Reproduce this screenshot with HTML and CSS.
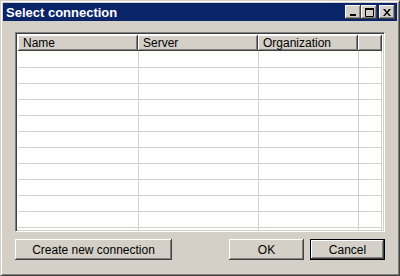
FILE: index.html
```html
<!DOCTYPE html>
<html lang="en">
<head>
  <meta charset="UTF-8">
  <title>Select connection</title>
  <link rel="stylesheet" href="styles.css">
</head>
<body>
  <div class="window">
    <div class="titlebar">
      <span class="title">Select connection</span>
      <div class="caption-btns">
        <button class="cap-btn" type="button">
          <svg width="8" height="7" viewBox="0 0 8 7"><rect x="1" y="5" width="6" height="2" fill="#000"/></svg>
        </button>
        <button class="cap-btn" type="button">
          <svg width="9" height="9" viewBox="0 0 9 9"><path d="M0.5 1.5h8v7h-8z" fill="none" stroke="#000"/><rect x="0" y="0" width="9" height="2" fill="#000"/></svg>
        </button>
        <button class="cap-btn close" type="button">
          <svg width="8" height="7" viewBox="0 0 8 7"><path d="M0 0h2l2 2.5l2-2.5h2l-3 3.5l3 3.5h-2l-2-2.5l-2 2.5h-2l3-3.5z" fill="#000"/></svg>
        </button>
      </div>
    </div>

    <div class="content">
      <div class="listview">
        <table>
          <thead>
            <tr>
              <th class="c-name">Name</th>
              <th class="c-server">Server</th>
              <th class="c-org">Organization</th>
              <th class="c-fill"></th>
            </tr>
          </thead>
          <tbody id="rows"></tbody>
        </table>
      </div>

      <div class="actions">
        <button class="btn btn-create" type="button">Create new connection</button>
        <div class="spacer"></div>
        <button class="btn btn-ok" type="button">OK</button>
        <button class="btn btn-cancel default" type="button">Cancel</button>
      </div>
    </div>
  </div>

  <script>
    const rows = document.getElementById("rows");
    let html = "";
    for (let i = 0; i < 12; i++) {
      html += "<tr><td></td><td></td><td></td><td></td></tr>";
    }
    rows.innerHTML = html;
  </script>
</body>
</html>
```

FILE: styles.css
```css
body {
  margin: 0;
  font-family: "Liberation Sans", Arial, sans-serif;
  font-size: 12px;
  background: #d4d0c8;
}

.window {
  width: 400px;
  height: 276px;
  box-sizing: border-box;
  background: #d4d0c8;
  border-top: 1px solid #d4d0c8;
  border-left: 1px solid #d4d0c8;
  border-right: 1px solid #404040;
  border-bottom: 1px solid #404040;
  box-shadow: inset 1px 1px 0 #fff, inset -1px -1px 0 #808080;
  padding: 2px;
  display: flex;
  flex-direction: column;
}

.titlebar {
  height: 18px;
  background: #0a246a;
  display: flex;
  align-items: center;
  padding: 0 2px 0 3px;
}

.title {
  color: #fff;
  font-weight: bold;
  font-size: 13px;
  flex: 1;
}

.caption-btns {
  display: flex;
}

.cap-btn {
  width: 16px;
  height: 14px;
  padding: 0;
  margin: 0;
  background: #d4d0c8;
  border: none;
  box-shadow: inset -1px -1px 0 #404040, inset 1px 1px 0 #fff, inset -2px -2px 0 #808080, inset 2px 2px 0 #d4d0c8;
  display: flex;
  align-items: center;
  justify-content: center;
}

.cap-btn.close {
  margin-left: 2px;
}

.content {
  flex: 1;
  padding: 11px 12px 0 12px;
  display: flex;
  flex-direction: column;
}

.listview {
  height: 200px;
  box-sizing: border-box;
  background: #fff;
  border-top: 1px solid #808080;
  border-left: 1px solid #808080;
  border-right: 1px solid #fff;
  border-bottom: 1px solid #fff;
  box-shadow: inset 1px 1px 0 #404040, inset -1px -1px 0 #d4d0c8;
  padding: 2px;
  overflow: hidden;
}

table {
  width: 100%;
  border-collapse: collapse;
  table-layout: fixed;
}

th {
  height: 16px;
  box-sizing: border-box;
  padding: 0 0 0 5px;
  text-align: left;
  font-weight: normal;
  background: #d4d0c8;
  color: #000;
  box-shadow: inset -1px -1px 0 #404040, inset 1px 1px 0 #fff, inset -2px -2px 0 #808080;
}

.c-name { width: 120px; }
.c-server { width: 120px; }
.c-org { width: 100px; }

td {
  height: 16px;
  box-sizing: border-box;
  padding: 0;
  border-right: 1px solid #d4d0c8;
  border-bottom: 1px solid #d4d0c8;
}

.actions {
  display: flex;
  margin-top: 7px;
}

.spacer {
  flex: 1;
}

.btn {
  height: 21px;
  box-sizing: border-box;
  font-family: "Liberation Sans", Arial, sans-serif;
  font-size: 12px;
  color: #000;
  background: #d4d0c8;
  border: none;
  padding: 0;
  box-shadow: inset -1px -1px 0 #404040, inset 1px 1px 0 #fff, inset -2px -2px 0 #808080;
}

.btn-create { width: 157px; }
.btn-ok { width: 75px; }
.btn-cancel { width: 75px; margin-left: 6px; }

.btn.default {
  border: 1px solid #000;
}
```
